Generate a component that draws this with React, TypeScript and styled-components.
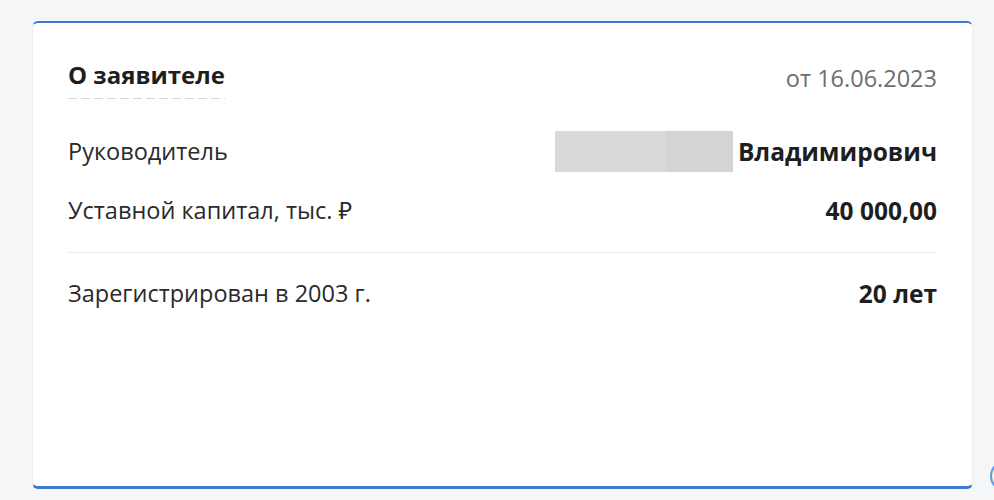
import React from "react";
import styled, { createGlobalStyle } from "styled-components";

const Global = createGlobalStyle`
  html, body { margin: 0; padding: 0; background: #f5f6f8; }
  body { font-family: "Open Sans", "Noto Sans", sans-serif; color: #222; }
`;

const Page = styled.div`
  position: relative;
  width: 994px;
  height: 500px;
  padding: 21px 21px 0 32px;
  box-sizing: border-box;
  overflow: hidden;
`;

const Card = styled.section`
  width: 941px;
  height: 468px;
  box-sizing: border-box;
  background: #fff;
  border-top: 2px solid #3d7acb;
  border-bottom: 3px solid #3d7acb;
  border-left: 1px solid #eceef1;
  border-right: 1px solid #eceef1;
  border-radius: 6px;
  padding: 36px 35px 0 35px;
  display: flex;
  flex-direction: column;
`;

const Header = styled.div`
  display: flex;
  justify-content: space-between;
  align-items: flex-start;
  margin-bottom: 31px;
`;

const Title = styled.h2`
  margin: 0;
  font-size: 24px;
  font-weight: 700;
  line-height: 32px;
  color: #1e1e1e;
  padding-bottom: 8px;
  background-image: repeating-linear-gradient(
    to right,
    #d3d7dc 0,
    #d3d7dc 9px,
    transparent 9px,
    transparent 13px
  );
  background-size: 100% 1px;
  background-repeat: no-repeat;
  background-position: bottom left;
`;

const DateText = styled.span`
  font-size: 23.5px;
  line-height: 32px;
  color: #6b6f75;
  margin-top: 3px;
`;

const Row = styled.div<{ $divider?: boolean }>`
  display: flex;
  justify-content: space-between;
  align-items: center;
  height: 42px;
  ${(p) =>
    p.$divider
      ? "padding-bottom: 21px; border-bottom: 1px solid #ebecee; margin-bottom: 19px;"
      : "margin-bottom: 17px;"}
`;

const Label = styled.span`
  font-size: 23.5px;
  color: #2a2a2a;
`;

const Value = styled.span`
  display: flex;
  align-items: center;
  font-size: 24.5px;
  font-weight: 700;
  color: #1e1e1e;
`;

const Redacted = styled.span`
  display: inline-flex;
  width: 178px;
  height: 41px;
  margin-right: 5px;
  background: linear-gradient(to right, #d9d9d9 0, #d9d9d9 111px, #d4d4d4 111px);
`;

const FloatButton = styled.div`
  position: absolute;
  left: 990px;
  top: 460px;
  width: 28px;
  height: 28px;
  border-radius: 50%;
  border: 2px solid #5b9be0;
  background: #eaf3fd;
`;

export default function App() {
  return (
    <>
      <Global />
      <Page>
        <Card>
          <Header>
            <Title>О заявителе</Title>
            <DateText>от 16.06.2023</DateText>
          </Header>
          <Row>
            <Label>Руководитель</Label>
            <Value>
              <Redacted />
              Владимирович
            </Value>
          </Row>
          <Row $divider>
            <Label>Уставной капитал, тыс. ₽</Label>
            <Value>40 000,00</Value>
          </Row>
          <Row>
            <Label>Зарегистрирован в 2003 г.</Label>
            <Value>20 лет</Value>
          </Row>
        </Card>
        <FloatButton />
      </Page>
    </>
  );
}
